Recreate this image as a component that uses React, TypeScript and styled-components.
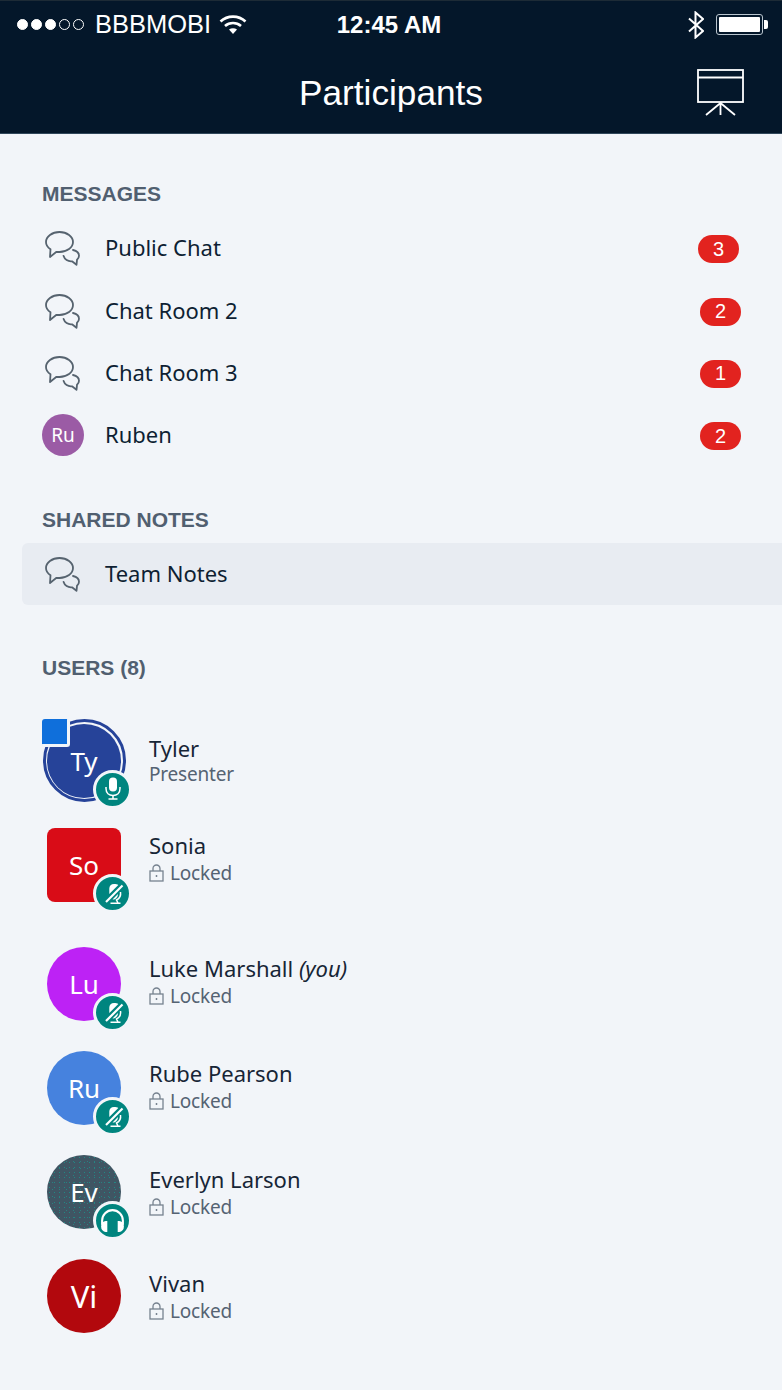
import { createGlobalStyle, styled } from "styled-components";

const GlobalStyle = createGlobalStyle`
  html, body {
    margin: 0;
    padding: 0;
    background: #f2f5f9;
  }
  * {
    box-sizing: border-box;
  }
`;

const Page = styled.div`
  width: 782px;
  height: 1390px;
  overflow: hidden;
  background: #f2f5f9;
  font-family: "Noto Sans", "Liberation Sans", sans-serif;
  color: #0e1f33;
`;

const TopBar = styled.header`
  height: 134px;
  background: #04172a;
  border-top: 1px solid #1d2b36;
  border-bottom: 1px solid #30475a;
  color: #ffffff;
  font-family: "Liberation Sans", sans-serif;
`;

const StatusBar = styled.div`
  height: 47px;
  padding: 0 19px 0 17px;
  display: grid;
  grid-template-columns: 1fr auto 1fr;
  align-items: center;
`;

const StatusLeft = styled.div`
  display: flex;
  align-items: center;
`;

const StatusRight = styled.div`
  display: flex;
  align-items: center;
  justify-content: flex-end;
  gap: 12px;
`;

const Signal = styled.div`
  display: flex;
  gap: 3px;
  margin-right: 11px;
`;

const SignalDot = styled.span<{ $on: boolean }>`
  width: 11px;
  height: 11px;
  border-radius: 50%;
  border: 1px solid #ffffff;
  background: ${(p) => (p.$on ? "#ffffff" : "transparent")};
`;

const Carrier = styled.span`
  font-size: 25.5px;
  margin-right: 8px;
`;

const Clock = styled.span`
  font-size: 24px;
  font-weight: bold;
  margin-right: 2px;
`;

const Battery = styled.div`
  width: 47px;
  height: 21px;
  padding: 2px;
  border: 1px solid #b9c5ce;
  border-radius: 3px;
  position: relative;
  &::before {
    content: "";
    display: block;
    height: 100%;
    background: #ffffff;
    border-radius: 1px;
  }
  &::after {
    content: "";
    position: absolute;
    top: 5px;
    right: -6px;
    width: 4px;
    height: 9px;
    background: #ffffff;
    border-radius: 0 2px 2px 0;
  }
`;

const NavBar = styled.div`
  height: 85px;
  padding: 4px 38px 0 0;
  display: flex;
  align-items: center;
  justify-content: flex-end;
  position: relative;
`;

const Title = styled.h1`
  position: absolute;
  left: 0;
  right: 0;
  top: 23px;
  margin: 0;
  text-align: center;
  font-size: 35.2px;
  line-height: 44px;
  font-weight: normal;
`;

const Content = styled.main`
  padding: 47px 0 0 22px;
`;

const SectionLabel = styled.h2`
  margin: 0 0 0 20px;
  font-family: "Liberation Sans", sans-serif;
  font-size: 21px;
  line-height: 26px;
  font-weight: bold;
  color: #515f70;
`;

const Section = styled.section<{ $gap: number }>`
  margin-bottom: ${(p) => p.$gap}px;
`;

const ChatList = styled.div`
  margin-top: 10px;
`;

const ChatRow = styled.div<{ $active?: boolean }>`
  height: 62.4px;
  display: flex;
  align-items: center;
  padding-left: 20px;
  background: ${(p) => (p.$active ? "#e8ecf2" : "transparent")};
  border-radius: 6px 0 0 6px;
`;

const ChatIconSlot = styled.div`
  width: 64px;
  flex: none;
  display: flex;
  align-items: center;
`;

const ChatGlyph = styled.svg`
  margin-left: 3px;
`;

const ChatName = styled.span`
  flex: 1;
  margin-left: -1px;
  padding-bottom: 2px;
  font-size: 22px;
`;

const MiniAvatar = styled.div`
  width: 42px;
  height: 42px;
  border-radius: 50%;
  background: #9b5ba5;
  color: #ffffff;
  display: flex;
  align-items: center;
  justify-content: center;
  font-size: 19px;
`;

const Count = styled.span<{ $right: number }>`
  width: 41px;
  height: 28px;
  margin-top: 2px;
  margin-right: ${(p) => p.$right}px;
  border-radius: 14px;
  background: #e2231f;
  color: #ffffff;
  font-family: "Liberation Sans", sans-serif;
  font-size: 20px;
  display: flex;
  align-items: center;
  justify-content: center;
`;

const UserList = styled.div`
  margin-top: 28px;
`;

const UserRow = styled.div<{ $top?: number }>`
  height: 104px;
  margin-top: ${(p) => p.$top ?? 0}px;
  padding-left: 25px;
  display: flex;
  align-items: center;
`;

const AvatarWrap = styled.div`
  width: 74px;
  height: 74px;
  flex: none;
  margin-right: 28px;
  position: relative;
`;

const Avatar = styled.div<{ $bg: string; $square?: boolean; $speckle?: boolean; $large?: boolean }>`
  width: 100%;
  height: 100%;
  border-radius: ${(p) => (p.$square ? "8px" : "50%")};
  background-color: ${(p) => p.$bg};
  ${(p) =>
    p.$speckle &&
    `background-image: radial-gradient(#1f8a86 0.6px, transparent 0.9px), radial-gradient(#2c7f80 0.6px, transparent 0.9px);
     background-size: 5px 5px, 7px 7px;
     background-position: 0 0, 2px 3px;`}
  color: #ffffff;
  display: flex;
  align-items: center;
  justify-content: center;
  font-size: ${(p) => (p.$large ? "31px" : "26px")};
`;

const PresenterRing = styled.div`
  position: absolute;
  inset: -5px -5px -4px -4px;
  border: 3px solid #264399;
  border-radius: 50%;
`;

const PresenterFlag = styled.div`
  position: absolute;
  left: -5px;
  top: -5px;
  width: 28px;
  height: 28px;
  background: #0f6fdb;
  border-right: 3px solid #f2f5f9;
  border-bottom: 3px solid #f2f5f9;
  border-radius: 3px;
`;

const StatusBadge = styled.div`
  position: absolute;
  right: -11px;
  bottom: -11px;
  width: 39px;
  height: 39px;
  border-radius: 50%;
  background: #00857f;
  border: 3px solid #f2f5f9;
  display: flex;
  align-items: center;
  justify-content: center;
`;

const UserInfo = styled.div<{ $lift?: number }>`
  display: flex;
  flex-direction: column;
  margin-bottom: ${(p) => p.$lift ?? 0}px;
`;

const UserName = styled.div`
  font-size: 22px;
  line-height: 28px;
  color: #172536;
  & em {
    font-style: italic;
  }
`;

const UserRole = styled.div<{ $locked?: boolean }>`
  margin-top: ${(p) => (p.$locked ? "2px" : "0")};
  font-size: 19px;
  line-height: 24px;
  letter-spacing: -0.2px;
  color: #556373;
  display: flex;
  align-items: center;
  gap: 6px;
`;

function ChatIcon() {
  return (
    <ChatGlyph width="36" height="36" viewBox="0 0 36 36" fill="none" stroke="#56636f" strokeWidth="1.8" strokeLinejoin="round" strokeLinecap="round">
      <path d="M14.500 2C7 2 1 6.500 1 12c0 3 1.700 5.500 4.500 7.300L5 27l6.500-5.200c1 .2 2 .2 3 .2 7.500 0 13.500-4.500 13.500-10S22 2 14.500 2z" />
      <path d="M28 20c3.500.8 6 3 6 5.800 0 1.700-.8 3-2 4l-.5 5-4.500-3.500c-4 .5-7.500-2-8.500-5.500" />
    </ChatGlyph>
  );
}

function BadgeIcon({ kind }: { kind: "mic" | "muted" | "audio" }) {
  if (kind === "audio") {
    return (
      <svg width="27" height="27" viewBox="0 0 26 26" fill="none">
        <path d="M3 17v-4a10 10 0 0 1 20 0v4" stroke="#fff" strokeWidth="2" />
        <path d="M8 13.500v10.500H6.500a4.500 5.250 0 0 1 0-10.500z" fill="#fff" />
        <path d="M18 13.500v10.500h1.500a4.500 5.250 0 0 0 0-10.500z" fill="#fff" />
      </svg>
    );
  }
  if (kind === "muted") {
    return (
      <svg width="26" height="26" viewBox="0 0 26 26" fill="none" stroke="#fff">
        <path d="M14 4c-2.800 0-4.700 2-4.700 4.500V14l9-9c-.8-.6-2.500-1-4.300-1z" fill="#fff" stroke="none" />
        <path d="M6 22L22.500 5.500" strokeWidth="2.200" />
        <path d="M20.500 12c.6 3.800-1 6.500-4 8l1.500 3M10.500 23.200h10" strokeWidth="1.500" />
        <path d="M12.500 19.500l5.500-5.500c0 3-2.500 6-5.500 5.500z" fill="#fff" stroke="none" />
      </svg>
    );
  }
  return (
    <svg width="26" height="26" viewBox="0 0 26 26" fill="none" stroke="#fff">
      <rect x="9" y="1.500" width="8" height="14" rx="4" fill="#fff" stroke="none" />
      <path d="M6 11v1.500c0 4.500 3 7 7 7s7-2.500 7-7V11" strokeWidth="1.500" />
      <path d="M13 19.500v3.500M8.500 23h9" strokeWidth="1.500" />
    </svg>
  );
}

function LockIcon() {
  return (
    <svg width="15" height="18" viewBox="0 0 15 18" fill="none" stroke="#76828f" strokeWidth="1.300">
      <rect x="1" y="7" width="13" height="10" />
      <path d="M4 7V4.500a3.500 3.500 0 0 1 7 0V7" />
      <path d="M7.500 11v2" strokeWidth="1.500" />
    </svg>
  );
}

const chats = [
  { name: "Public Chat", count: 3, right: 43 },
  { name: "Chat Room 2", count: 2, right: 41 },
  { name: "Chat Room 3", count: 1, right: 41 },
];

type User = {
  initials: string;
  name: string;
  bg: string;
  badge?: "mic" | "muted" | "audio";
  square?: boolean;
  speckle?: boolean;
  large?: boolean;
  you?: boolean;
  top?: number;
  lift?: number;
};

const users: User[] = [
  { initials: "So", name: "Sonia", bg: "#d90c17", badge: "muted", square: true, lift: 13 },
  { initials: "Lu", name: "Luke Marshall", bg: "#bd22f5", badge: "muted", you: true, top: 15, lift: 6 },
  { initials: "Ru", name: "Rube Pearson", bg: "#4682de", badge: "muted", lift: 3 },
  { initials: "Ev", name: "Everlyn Larson", bg: "#3f5563", badge: "audio", speckle: true },
  { initials: "Vi", name: "Vivan", bg: "#b2080d", large: true },
];

export default function App() {
  return (
    <Page>
      <GlobalStyle />
      <TopBar>
        <StatusBar>
          <StatusLeft>
            <Signal>
              {[true, true, true, false, false].map((on, i) => (
                <SignalDot key={i} $on={on} />
              ))}
            </Signal>
            <Carrier>BBBMOBI</Carrier>
            <svg width="28" height="20" viewBox="0 0 28 20" fill="none" stroke="#fff" strokeWidth="2.600">
              <path d="M1.500 6.500c7-6.500 18-6.500 25 0" />
              <path d="M6 11c4.500-4 11.500-4 16 0" />
              <path d="M14 19l-4-4.500c2.200-1.600 5.800-1.600 8 0z" fill="#fff" stroke="none" />
            </svg>
          </StatusLeft>
          <Clock>12:45 AM</Clock>
          <StatusRight>
            <svg width="16" height="28" viewBox="0 0 16 28" fill="none" stroke="#fff" strokeWidth="2">
              <path d="M1 7.500l14 12.500-7.500 6.500V1.500L15 8 1 20.500" />
            </svg>
            <Battery />
          </StatusRight>
        </StatusBar>
        <NavBar>
          <Title>Participants</Title>
          <svg width="47" height="47" viewBox="0 0 47 47" fill="none" stroke="#fff" strokeWidth="1.800">
            <rect x="1" y="1" width="45" height="32" />
            <path d="M1 8.500h45" />
            <path d="M23.500 33v13M23.500 34L9 46M23.500 34L38 46" />
          </svg>
        </NavBar>
      </TopBar>
      <Content>
        <Section $gap={40}>
          <SectionLabel>MESSAGES</SectionLabel>
          <ChatList>
            {chats.map((chat) => (
              <ChatRow key={chat.name}>
                <ChatIconSlot>
                  <ChatIcon />
                </ChatIconSlot>
                <ChatName>{chat.name}</ChatName>
                <Count $right={chat.right}>{chat.count}</Count>
              </ChatRow>
            ))}
            <ChatRow>
              <ChatIconSlot>
                <MiniAvatar>Ru</MiniAvatar>
              </ChatIconSlot>
              <ChatName>Ruben</ChatName>
              <Count $right={41}>2</Count>
            </ChatRow>
          </ChatList>
        </Section>
        <Section $gap={50}>
          <SectionLabel>SHARED NOTES</SectionLabel>
          <ChatList>
            <ChatRow $active>
              <ChatIconSlot>
                <ChatIcon />
              </ChatIconSlot>
              <ChatName>Team Notes</ChatName>
            </ChatRow>
          </ChatList>
        </Section>
        <Section $gap={0}>
          <SectionLabel>USERS (8)</SectionLabel>
          <UserList>
            <UserRow>
              <AvatarWrap>
                <PresenterRing />
                <Avatar $bg="#264399">Ty</Avatar>
                <PresenterFlag />
                <StatusBadge>
                  <BadgeIcon kind="mic" />
                </StatusBadge>
              </AvatarWrap>
              <UserInfo $lift={1}>
                <UserName>Tyler</UserName>
                <UserRole>Presenter</UserRole>
              </UserInfo>
            </UserRow>
            {users.map((user) => (
              <UserRow key={user.name} $top={user.top}>
                <AvatarWrap>
                  <Avatar $bg={user.bg} $square={user.square} $speckle={user.speckle} $large={user.large}>
                    {user.initials}
                  </Avatar>
                  {user.badge && (
                    <StatusBadge>
                      <BadgeIcon kind={user.badge} />
                    </StatusBadge>
                  )}
                </AvatarWrap>
                <UserInfo $lift={user.lift}>
                  <UserName>
                    {user.name}
                    {user.you && <em> (you)</em>}
                  </UserName>
                  <UserRole $locked>
                    <LockIcon />
                    Locked
                  </UserRole>
                </UserInfo>
              </UserRow>
            ))}
          </UserList>
        </Section>
      </Content>
    </Page>
  );
}
